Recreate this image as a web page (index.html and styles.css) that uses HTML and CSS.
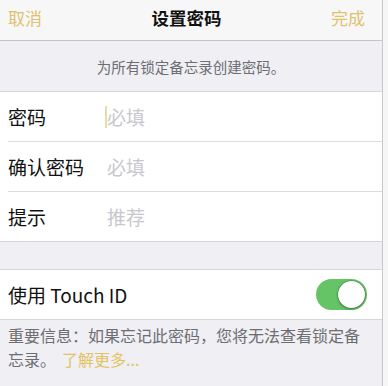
FILE: index.html
```html
<!DOCTYPE html>
<html lang="zh-CN">
<head>
<meta charset="utf-8">
<title>设置密码</title>
<link rel="stylesheet" href="styles.css">
</head>
<body>
<div class="screen">
  <div class="nav">
    <span class="nav-btn">取消</span>
    <span class="nav-title">设置密码</span>
    <span class="nav-btn">完成</span>
  </div>
  <div class="header">为所有锁定备忘录创建密码。</div>
  <div class="group">
    <div class="row"><span class="label">密码</span><span class="field"><span class="cursor"></span>必填</span></div>
    <div class="row"><span class="label">确认密码</span><span class="field">必填</span></div>
    <div class="row last"><span class="label">提示</span><span class="field">推荐</span></div>
  </div>
  <div class="gap"></div>
  <div class="group touch">
    <div class="row last"><span class="label wide">使用 Touch ID</span><span class="switch"><span class="knob"></span></span></div>
  </div>
  <div class="footer">
    <div class="footer-line">重要信息：如果忘记此密码，您将无法查看锁定备</div>
    <div class="footer-line"><span class="note">忘录。</span><span class="link">了解更多...</span></div>
  </div>
</div>
</body>
</html>
```
FILE: styles.css
```css
html, body {
  margin: 0;
  padding: 0;
  background: #f6f6f6;
}
body {
  font-family: "Noto Sans CJK SC", "Noto Sans", sans-serif;
  color: #111;
  width: 388px;
  height: 386px;
  overflow: hidden;
}
.screen {
  width: 382px;
  height: 386px;
  background: #efeff4;
  border-right: 1px solid #c9c9cc;
}
.nav {
  height: 41px;
  box-sizing: border-box;
  padding: 0 17px 4px 8px;
  display: flex;
  align-items: center;
  justify-content: space-between;
  background: #f7f7f8;
  border-bottom: 1px solid #c4c4c8;
}
.nav-btn {
  font-size: 17px;
  line-height: 22px;
  color: #dfc26c;
}
.nav-title {
  font-size: 17.5px;
  line-height: 22px;
  font-weight: bold;
  color: #111;
}
.header {
  height: 51px;
  box-sizing: border-box;
  display: flex;
  align-items: center;
  justify-content: center;
  padding-top: 1px;
  font-size: 14.5px;
  color: #6d6d72;
  border-bottom: 1px solid #d6d6da;
}
.group {
  background: #fff;
  border-bottom: 1px solid #d6d6da;
}
.group.touch {
  border-top: 1px solid #d6d6da;
}
.row {
  height: 49px;
  margin-left: 8px;
  display: grid;
  grid-template-columns: 99px 1fr;
  align-items: center;
  border-bottom: 1px solid #dcdce0;
}
.row.last {
  border-bottom: none;
}
.label {
  font-size: 19px;
  line-height: 24px;
  color: #111;
  white-space: nowrap;
}
.field {
  font-size: 19px;
  line-height: 24px;
  color: #c7c7cd;
  display: flex;
  align-items: center;
}
.cursor {
  width: 2px;
  height: 22px;
  margin-left: -2px;
  background: #e7dcaa;
}
.gap {
  height: 27px;
}
.touch .row {
  grid-template-columns: 1fr auto;
  padding-right: 15px;
}
.switch {
  width: 51px;
  height: 31px;
  box-sizing: border-box;
  border-radius: 16px;
  background: #64c466;
  display: flex;
  justify-content: flex-end;
  align-items: center;
  padding: 2px;
}
.knob {
  width: 27px;
  height: 27px;
  border-radius: 50%;
  background: #fff;
  box-shadow: 0 1px 3px rgba(0,0,0,0.35), 0 0 0 0.5px rgba(0,0,0,0.25);
}
.footer {
  padding: 4px 12px 0 8px;
  font-size: 16px;
  line-height: 23.5px;
  color: #6d6d72;
}
.footer-line {
  white-space: nowrap;
}
.link {
  margin-left: 6px;
  color: #e2c35f;
}
```
